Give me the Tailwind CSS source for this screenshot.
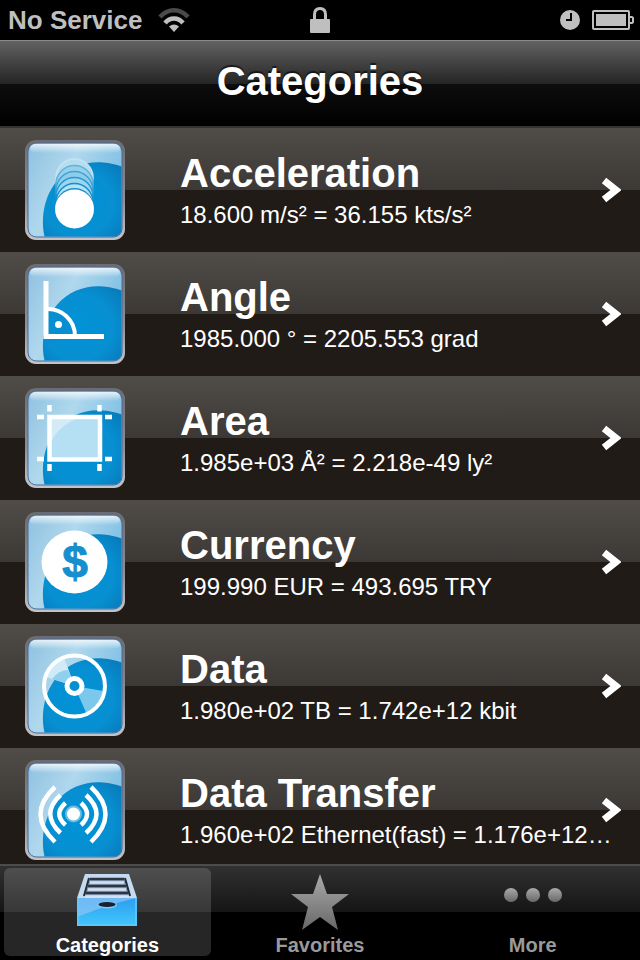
<!DOCTYPE html>
<html lang="en">

<head>
    <meta charset="UTF-8">
    <meta name="viewport" content="width=device-width, initial-scale=1.0">
    <title>Categories</title>
    <script src="https://cdn.jsdelivr.net/npm/@tailwindcss/browser@4"></script>
</head>

<body class="h-screen flex flex-col overflow-hidden bg-black text-white font-['Liberation_Sans',Arial,sans-serif]">
    <!-- Shared icon parts -->
    <svg class="absolute size-0" aria-hidden="true">
        <defs>
            <linearGradient id="rim" x1="0" y1="0" x2="0" y2="1">
                <stop offset="0" stop-color="#6c6c70" />
                <stop offset="0.6" stop-color="#8e8f95" />
                <stop offset="1" stop-color="#c4c4c8" />
            </linearGradient>
            <linearGradient id="glass" x1="0" y1="0" x2="1" y2="0.5">
                <stop offset="0" stop-color="#8fc1e0" />
                <stop offset="0.45" stop-color="#b0d8ed" />
                <stop offset="1" stop-color="#78bce2" />
            </linearGradient>
            <linearGradient id="gloss" x1="0" y1="0" x2="0" y2="1">
                <stop offset="0" stop-color="#fff" stop-opacity="0.75" />
                <stop offset="1" stop-color="#fff" stop-opacity="0" />
            </linearGradient>
            <radialGradient id="wave" cx="0.45" cy="0.55" r="0.75">
                <stop offset="0" stop-color="#0093d6" />
                <stop offset="0.6" stop-color="#078fd1" />
                <stop offset="1" stop-color="#0878b8" />
            </radialGradient>
            <linearGradient id="metal" x1="0" y1="0" x2="0" y2="1">
                <stop offset="0" stop-color="#a9a9a9" />
                <stop offset="1" stop-color="#686868" />
            </linearGradient>
            <linearGradient id="drawer" x1="0" y1="0" x2="0" y2="1">
                <stop offset="0" stop-color="#2d9df0" />
                <stop offset="1" stop-color="#42c8fc" />
            </linearGradient>
            <symbol id="tile" viewBox="0 0 100 100">
                <rect width="100" height="100" rx="11" fill="url(#rim)" />
                <rect x="2.5" y="2.5" width="95" height="95" rx="9" fill="#4a6a9c" />
                <rect x="3.5" y="3.5" width="93" height="93" rx="8" fill="url(#glass)" />
                <path d="M19.500 96.500C15 74 21 55 31 42C43 27 61 21 78 22.500C85 23 91 24.500 96.500 26.500V88Q96.500 96.500 88 96.500Z" fill="url(#wave)" />
                <rect x="5" y="4" width="90" height="9" rx="6" fill="url(#gloss)" />
            </symbol>
            <symbol id="chevron" viewBox="0 0 20 26">
                <path d="M3 3.500L15 13L3 22.500" fill="none" stroke="#fff" stroke-width="7" />
            </symbol>
        </defs>
    </svg>

    <!-- Status bar -->
    <div class="flex h-10 shrink-0 items-center justify-between px-2 text-[#bfbfbf]">
        <div class="flex flex-1 items-center gap-4">
            <span class="text-[26px] leading-10 font-bold">No Service</span>
            <svg class="h-6 w-8" viewBox="0 0 32 24" fill="none" stroke="currentColor" stroke-width="4.5" aria-label="Wi-Fi">
                <path d="M2 9C10 0 22 0 30 9" stroke="#4a4a4a" />
                <path d="M7 15C12 9 20 9 25 15" />
                <path d="M16 24L11 18.500Q16 14.500 21 18.500Z" fill="currentColor" stroke="none" />
            </svg>
        </div>
        <svg class="h-[26px] w-5" viewBox="0 0 20 26" aria-label="Locked">
            <path d="M4.500 13V7.500Q4.500 1.500 10 1.500T15.500 7.500V13" fill="none" stroke="currentColor" stroke-width="3" />
            <rect y="12" width="20" height="14" rx="1" fill="currentColor" />
        </svg>
        <div class="flex flex-1 items-center justify-end gap-3">
            <svg class="size-5" viewBox="0 0 20 20" aria-label="Alarm">
                <circle cx="10" cy="10" r="10" fill="currentColor" />
                <path d="M11 3V10H6" fill="none" stroke="#000" stroke-width="2" />
            </svg>
            <svg class="-mr-0.5 h-5 w-[42px]" viewBox="0 0 42 20" aria-label="Battery">
                <rect x="1" y="1" width="36" height="18" rx="1" fill="none" stroke="currentColor" stroke-width="2" />
                <rect x="4" y="4" width="30" height="12" fill="currentColor" />
                <path d="M37 7H39.500Q41 7 41 8.500V11.500Q41 13 39.500 13H37" fill="none" stroke="currentColor" stroke-width="2" />
            </svg>
        </div>
    </div>

    <!-- Title bar -->
    <header class="flex h-[88px] shrink-0 items-center justify-center border-t border-b-2 border-t-[#8a8a8a] border-b-[#343130] bg-[linear-gradient(#626262,#474747_22%,#252525_50%,#0d0d0d_51%,#000)]">
        <h1 class="pb-1.5 text-[40px] leading-12 font-bold [text-shadow:0_-2px_1px_#00000099]">Categories</h1>
    </header>

    <!-- Category list -->
    <main class="min-h-0 flex-1 overflow-y-auto [scrollbar-width:none]">
        <ul>
            <li>
                <a href="#acceleration" class="relative flex h-[124px] items-center gap-[55px] bg-[linear-gradient(#504c48,#3c3835_50%,#211b18_50%)] pr-6 pl-[25px]">
                    <svg class="size-[100px] shrink-0" viewBox="0 0 100 100">
                        <use href="#tile" />
                        <g stroke-width="1.5">
                            <circle cx="49.500" cy="37.500" r="18.500" fill="#b5dcef" stroke="#c6e5f3" />
                            <circle cx="49.500" cy="44" r="18.500" fill="#98d0ea" stroke="#5fb2dc" />
                            <circle cx="49.500" cy="50" r="18.500" fill="#8dcdea" stroke="#3fa3d6" />
                            <circle cx="49.500" cy="56" r="18.500" fill="#9bd6f0" stroke="#2698d1" />
                            <circle cx="49.500" cy="62" r="18.500" fill="#b5e2f5" stroke="#168ecb" />
                        </g>
                        <circle cx="49.500" cy="67.500" r="19.500" fill="#168ecb" />
                        <circle cx="49.500" cy="69" r="19.500" fill="#fff" />
                    </svg>
                    <div class="min-w-0 flex-1">
                        <h2 class="truncate text-[40px] leading-[50px] font-bold">Acceleration</h2>
                        <p class="truncate text-2xl leading-[34px]">18.600 m/s² = 36.155 kts/s²</p>
                    </div>
                    <svg class="absolute right-[19px] h-[26px] w-5"><use href="#chevron" /></svg>
                </a>
            </li>
            <li>
                <a href="#angle" class="relative flex h-[124px] items-center gap-[55px] bg-[linear-gradient(#504c48,#3c3835_50%,#211b18_50%)] pr-6 pl-[25px]">
                    <svg class="size-[100px] shrink-0" viewBox="0 0 100 100">
                        <use href="#tile" />
                        <path d="M21 45A27 27 0 0 1 50 72H21Z" fill="#078fd1" stroke="#fff" stroke-width="4" />
                        <path d="M21 17V72.500H79" fill="none" stroke="#fff" stroke-width="5" />
                        <circle cx="33.500" cy="60.500" r="3.500" fill="#fff" />
                    </svg>
                    <div class="min-w-0 flex-1">
                        <h2 class="truncate text-[40px] leading-[50px] font-bold">Angle</h2>
                        <p class="truncate text-2xl leading-[34px]">1985.000 ° = 2205.553 grad</p>
                    </div>
                    <svg class="absolute right-[19px] h-[26px] w-5"><use href="#chevron" /></svg>
                </a>
            </li>
            <li>
                <a href="#area" class="relative flex h-[124px] items-center gap-[55px] bg-[linear-gradient(#504c48,#3c3835_50%,#211b18_50%)] pr-6 pl-[25px]">
                    <svg class="size-[100px] shrink-0" viewBox="0 0 100 100">
                        <use href="#tile" />
                        <rect x="24" y="29" width="51" height="43" fill="#b5dff3" />
                        <path d="M24 72V60C29 44 42 32 59 29H24Z" fill="#d3ebf7" />
                        <rect x="24.500" y="29" width="50.500" height="42.500" fill="none" stroke="#fff" stroke-width="4.500" />
                        <path d="M24.500 17V23.500M74.500 17V23.500M24.500 76V83M74.500 76V83M12 29H19M80 29H87M12 71H19M80 71H87" stroke="#fff" stroke-width="4.500" />
                    </svg>
                    <div class="min-w-0 flex-1">
                        <h2 class="truncate text-[40px] leading-[50px] font-bold">Area</h2>
                        <p class="truncate text-2xl leading-[34px]">1.985e+03 Å² = 2.218e-49 ly²</p>
                    </div>
                    <svg class="absolute right-[19px] h-[26px] w-5"><use href="#chevron" /></svg>
                </a>
            </li>
            <li>
                <a href="#currency" class="relative flex h-[124px] items-center gap-[55px] bg-[linear-gradient(#504c48,#3c3835_50%,#211b18_50%)] pr-6 pl-[25px]">
                    <svg class="size-[100px] shrink-0" viewBox="0 0 100 100">
                        <use href="#tile" />
                        <ellipse cx="49.500" cy="50" rx="33" ry="31.500" fill="#fff" />
                        <text x="50" y="66" text-anchor="middle" font-size="46" font-weight="700" fill="#168fce" stroke="#168fce">$</text>
                    </svg>
                    <div class="min-w-0 flex-1">
                        <h2 class="truncate text-[40px] leading-[50px] font-bold">Currency</h2>
                        <p class="truncate text-2xl leading-[34px]">199.990 EUR = 493.695 TRY</p>
                    </div>
                    <svg class="absolute right-[19px] h-[26px] w-5"><use href="#chevron" /></svg>
                </a>
            </li>
            <li>
                <a href="#data" class="relative flex h-[124px] items-center gap-[55px] bg-[linear-gradient(#504c48,#3c3835_50%,#211b18_50%)] pr-6 pl-[25px]">
                    <svg class="size-[100px] shrink-0" viewBox="0 0 100 100">
                        <use href="#tile" />
                        <path d="M49.500 50L21 41Q27 26 39 21.500Z" fill="#d0eaf7" />
                        <path d="M49.500 50L78 55Q75 70 61 76.500Z" fill="#7cc8ec" />
                        <path d="M27 43L49.500 50L43 34Q34 34 27 43Z" fill="#8fd0ee" />
                        <circle cx="49.500" cy="50" r="30.500" fill="none" stroke="#fff" stroke-width="4" />
                        <circle cx="49.500" cy="50" r="7.500" fill="#078fd1" stroke="#fff" stroke-width="5" />
                    </svg>
                    <div class="min-w-0 flex-1">
                        <h2 class="truncate text-[40px] leading-[50px] font-bold">Data</h2>
                        <p class="truncate text-2xl leading-[34px]">1.980e+02 TB = 1.742e+12 kbit</p>
                    </div>
                    <svg class="absolute right-[19px] h-[26px] w-5"><use href="#chevron" /></svg>
                </a>
            </li>
            <li>
                <a href="#data-transfer" class="relative flex h-[124px] items-center gap-[55px] bg-[linear-gradient(#504c48,#3c3835_50%,#211b18_50%)] pr-6 pl-[25px]">
                    <svg class="size-[100px] shrink-0" viewBox="0 0 100 100">
                        <use href="#tile" />
                        <circle cx="48.500" cy="54" r="8.500" fill="#fff" fill-opacity="0.4" />
                        <circle cx="48.500" cy="54" r="6.500" fill="#fff" />
                        <g fill="none" stroke="#fff" stroke-width="4.500">
                            <path d="M56 43Q68 54 56 65M61 35Q82 54 61 73M66 27Q95 54 66 82" />
                            <path d="M40.500 43Q28 54 40.500 65M35.500 35Q15 54 35.500 73M30 27Q1 54 30 82" />
                        </g>
                    </svg>
                    <div class="min-w-0 flex-1">
                        <h2 class="truncate text-[40px] leading-[50px] font-bold">Data Transfer</h2>
                        <p class="truncate text-2xl leading-[34px]">1.960e+02 Ethernet(fast) = 1.176e+12…</p>
                    </div>
                    <svg class="absolute right-[19px] h-[26px] w-5"><use href="#chevron" /></svg>
                </a>
            </li>
        </ul>
    </main>

    <!-- Tab bar -->
    <nav class="grid h-24 shrink-0 grid-cols-3 gap-1.5 border-t-2 border-[#4c4c4c] bg-[linear-gradient(#313131,#151515_49%,#000_49%)] px-1 pt-0.5 pb-1 text-xl leading-[22px] font-bold text-[#9a9a9a]">
        <a href="#categories" aria-current="page" class="flex flex-col items-center justify-between rounded-md bg-white/15 pt-1.5 text-white">
            <svg class="h-[54px] w-[60px]" viewBox="0 0 60 54">
                <path d="M8 0H52L60 24V28H0V24Z" fill="#c5d9f1" />
                <path d="M12 4H48L54 22H6Z" fill="#8fa3bf" />
                <path d="M12 4L7 22M48 4L53 22" stroke="#222c3a" stroke-width="2" />
                <path d="M13 5H47M11 12H49M9 19H51" stroke="#2d3543" stroke-width="2.500" />
                <path d="M13 8.500H47M11 15.500H49M8 22.500H52" stroke="#d2e2f5" stroke-width="2.500" />
                <rect y="24" width="60" height="28" fill="url(#drawer)" />
                <path d="M0 24H60Q36 29 0 43Z" fill="#8dc5f7" fill-opacity="0.7" />
                <path d="M1 24V51H59V24" fill="none" stroke="#63c9fb" stroke-width="1.500" />
                <ellipse cx="30" cy="31" rx="10" ry="3.500" fill="#82c8f8" />
                <ellipse cx="30" cy="30.500" rx="8.500" ry="2.500" fill="#18222e" />
            </svg>
            <span>Categories</span>
        </a>
        <a href="#favorites" class="flex flex-col items-center justify-between pt-1.5">
            <svg class="h-14 w-[58px]" viewBox="0 0 58 56">
                <path d="M29 0L36 20H58L41 33L47 56L29 43L11 56L17 33L0 20H22Z" fill="url(#metal)" />
            </svg>
            <span>Favorites</span>
        </a>
        <a href="#more" class="flex flex-col items-center justify-between pt-5">
            <svg class="h-3.5 w-[58px]" viewBox="0 0 58 14" fill="url(#metal)">
                <circle cx="7" cy="7" r="7" />
                <circle cx="29" cy="7" r="7" />
                <circle cx="51" cy="7" r="7" />
            </svg>
            <span>More</span>
        </a>
    </nav>
</body>

</html>
